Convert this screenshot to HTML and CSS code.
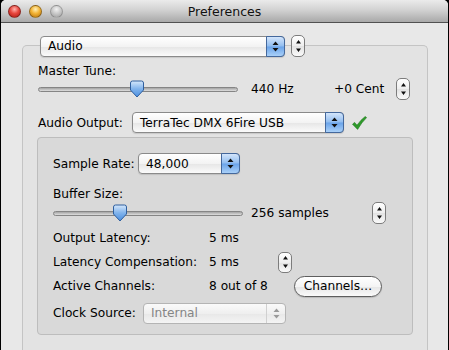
FILE: index.html
```html
<!DOCTYPE html>
<html lang="en">
<head>
  <meta charset="UTF-8"/>
  <title>Preferences</title>
  <link rel="stylesheet" href="styles.css">
</head>
<body>
  <div class="window">
    <header class="titlebar">
      <div class="lights">
        <span class="light close"></span>
        <span class="light minimize"></span>
        <span class="light zoom"></span>
      </div>
      <div class="title">Preferences</div>
    </header>

    <main class="content">
      <section class="group">
        <div class="group-head">
          <div class="popup popup-section">
            <span class="popup-text">Audio</span>
            <span class="arrows"><svg width="7" height="11" viewBox="0 0 7 11"><path d="M3.5 0.5 L6.5 4 H0.5Z M3.5 10.5 L6.5 7 H0.5Z" fill="#111"/></svg></span>
          </div>
          <span class="stepper"><svg width="7" height="14" viewBox="0 0 7 14"><path d="M3.5 1 L6 4.5 H1Z M3.5 13 L6 9.5 H1Z" fill="#111"/></svg></span>
        </div>

        <div class="field-label">Master Tune:</div>
        <div class="slider-row">
          <div class="slider slider-tune">
            <span class="track"></span>
            <svg class="knob knob-tune" width="16" height="18" viewBox="0 0 16 18">
              <defs><linearGradient id="kg1" x1="0" y1="0" x2="0" y2="1"><stop offset="0" stop-color="#d6e8fb"/><stop offset="0.5" stop-color="#7fb2ec"/><stop offset="1" stop-color="#4a8ee0"/></linearGradient></defs>
              <path d="M1.5 3 Q1.5 1 3.5 1 H12.5 Q14.5 1 14.5 3 V10 L8 17 L1.5 10Z" fill="url(#kg1)" stroke="#2f5f9e"/>
            </svg>
          </div>
          <span class="value value-hz">440 Hz</span>
          <span class="value value-cent">+0 Cent</span>
          <span class="stepper"><svg width="7" height="14" viewBox="0 0 7 14"><path d="M3.5 1 L6 4.5 H1Z M3.5 13 L6 9.5 H1Z" fill="#111"/></svg></span>
        </div>

        <div class="row output-row">
          <span class="row-label label-output">Audio Output:</span>
          <div class="popup popup-output">
            <span class="popup-text">TerraTec DMX 6Fire USB</span>
            <span class="arrows"><svg width="7" height="11" viewBox="0 0 7 11"><path d="M3.5 0.5 L6.5 4 H0.5Z M3.5 10.5 L6.5 7 H0.5Z" fill="#111"/></svg></span>
          </div>
          <svg class="check" width="15" height="14" viewBox="0 0 15 14">
            <path d="M0.5 8.2 L2.6 6.4 L5 9.2 Q8.5 4 13.2 0.5 L14.6 1.6 Q9.8 6.2 5.6 13.4Z" fill="#2f9a2b" stroke="#1f7a1c" stroke-width="0.6"/>
          </svg>
        </div>

        <section class="device">
          <div class="row">
            <span class="row-label label-rate">Sample Rate:</span>
            <div class="popup popup-rate">
              <span class="popup-text">48,000</span>
              <span class="arrows"><svg width="7" height="11" viewBox="0 0 7 11"><path d="M3.5 0.5 L6.5 4 H0.5Z M3.5 10.5 L6.5 7 H0.5Z" fill="#111"/></svg></span>
            </div>
          </div>

          <div class="field-label buffer-label">Buffer Size:</div>
          <div class="slider-row">
            <div class="slider slider-buffer">
              <span class="track"></span>
              <svg class="knob knob-buffer" width="16" height="18" viewBox="0 0 16 18">
                <defs><linearGradient id="kg2" x1="0" y1="0" x2="0" y2="1"><stop offset="0" stop-color="#d6e8fb"/><stop offset="0.5" stop-color="#7fb2ec"/><stop offset="1" stop-color="#4a8ee0"/></linearGradient></defs>
                <path d="M1.5 3 Q1.5 1 3.5 1 H12.5 Q14.5 1 14.5 3 V10 L8 17 L1.5 10Z" fill="url(#kg2)" stroke="#2f5f9e"/>
              </svg>
            </div>
            <span class="value value-samples">256 samples</span>
            <span class="stepper"><svg width="7" height="14" viewBox="0 0 7 14"><path d="M3.5 1 L6 4.5 H1Z M3.5 13 L6 9.5 H1Z" fill="#111"/></svg></span>
          </div>

          <div class="info">
            <div class="info-row">
              <span class="info-label">Output Latency:</span>
              <span class="info-value">5 ms</span>
            </div>
            <div class="info-row">
              <span class="info-label">Latency Compensation:</span>
              <span class="info-value value-comp">5 ms</span>
              <span class="stepper stepper-small"><svg width="7" height="14" viewBox="0 0 7 14"><path d="M3.5 1 L6 4.5 H1Z M3.5 13 L6 9.5 H1Z" fill="#111"/></svg></span>
            </div>
            <div class="info-row">
              <span class="info-label">Active Channels:</span>
              <span class="info-value value-channels">8 out of 8</span>
              <button class="pill">Channels…</button>
            </div>
            <div class="info-row clock-row">
              <span class="row-label label-clock">Clock Source:</span>
              <div class="popup popup-clock disabled">
                <span class="popup-text">Internal</span>
                <span class="arrows"><svg width="7" height="11" viewBox="0 0 7 11"><path d="M3.5 0.5 L6.5 4 H0.5Z M3.5 10.5 L6.5 7 H0.5Z" fill="#9a9a9a"/></svg></span>
              </div>
            </div>
          </div>
        </section>
      </section>
    </main>
  </div>
</body>
</html>
```

FILE: styles.css
```css
* {
  box-sizing: border-box;
  margin: 0;
  padding: 0;
}
html, body {
  background: #000;
}
body {
  font-family: "DejaVu Sans", sans-serif;
  font-size: 12.2px;
  color: #000;
  width: 449px;
  height: 350px;
  overflow: hidden;
}
.window {
  margin: 0 1px;
  height: 350px;
  background: #e8e8e8;
  border-radius: 5px 5px 0 0;
  overflow: hidden;
}

/* title bar */
.titlebar {
  height: 23px;
  display: grid;
  grid-template-columns: 1fr auto 1fr;
  align-items: center;
  background: linear-gradient(#ebebeb, #d2d2d2 45%, #a9a9a9);
  border-bottom: 1px solid #515151;
}
.lights {
  display: flex;
  gap: 8px;
  padding-left: 7px;
}
.light {
  width: 13px;
  height: 13px;
  border-radius: 50%;
  border: 1px solid rgba(0,0,0,0.35);
}
.light.close {
  background: radial-gradient(circle at 50% 30%, #ffb3ad 0, #e8473e 45%, #a9180f 100%);
}
.light.minimize {
  background: radial-gradient(circle at 50% 30%, #fff0b8 0, #f3b436 45%, #b4700b 100%);
}
.light.zoom {
  background: radial-gradient(circle at 50% 30%, #f2f2f2 0, #c6c6c6 50%, #9c9c9c 100%);
  border-color: rgba(0,0,0,0.2);
}
.title {
  font-size: 12.5px;
  color: #111;
}

/* main panel */
.content {
  padding-left: 21px;
}
.group {
  margin-top: 22px;
  width: 406px;
  height: 320px;
  padding: 0 15px;
  background: #e3e3e3;
  border: 1px solid #c4c4c4;
  border-bottom: none;
  border-radius: 5px 5px 0 0;
}
.group-head {
  display: flex;
  align-items: center;
  gap: 6px;
  margin: -11px 0 0 2px;
}
.field-label {
  line-height: 14px;
  margin-top: 7px;
}
.slider-row {
  height: 22px;
  display: flex;
  align-items: center;
}
.row {
  height: 21px;
  display: flex;
  align-items: center;
}
.output-row {
  margin-top: 12px;
}
.row-label {
  flex: none;
}
.label-output { width: 94px; }
.label-rate { width: 85px; }
.label-clock { width: 90px; }

/* popup buttons */
.popup {
  height: 21px;
  display: flex;
  align-items: center;
  padding-left: 7px;
  border: 1px solid #8a8a8a;
  border-radius: 4px;
  background: linear-gradient(#ffffff, #f3f3f3 50%, #e6e6e6 52%, #fbfbfb);
  box-shadow: 0 1px 1px rgba(0,0,0,0.12);
}
.popup-text {
  flex: 1;
  white-space: nowrap;
}
.popup .arrows {
  flex: none;
  width: 19px;
  height: 21px;
  margin: -1px -1px -1px 0;
  display: flex;
  align-items: center;
  justify-content: center;
  border: 1px solid #44689c;
  border-radius: 0 4px 4px 0;
  background: linear-gradient(#d3e5fb, #91bdf0 48%, #6aa3e9 52%, #a9d0f8);
}
.popup.disabled {
  border-color: #b4b4b4;
  background: linear-gradient(#fafafa, #efefef 50%, #e8e8e8 52%, #f4f4f4);
  box-shadow: none;
}
.popup.disabled .popup-text {
  color: #858585;
}
.popup.disabled .arrows {
  border: none;
  border-left: 1px solid #d0d0d0;
  margin: 0;
  height: 19px;
  background: none;
}
.popup-section { width: 245px; }
.popup-output { width: 212px; }
.popup-rate { width: 102px; }
.popup-clock { width: 143px; }

.check {
  margin-left: 8px;
}

/* steppers */
.stepper {
  flex: none;
  width: 14px;
  height: 22px;
  display: flex;
  align-items: center;
  justify-content: center;
  border: 1px solid #7c7c7c;
  border-radius: 5px;
  background: linear-gradient(#ffffff, #eeeeee 50%, #e3e3e3 52%, #fafafa);
}
.stepper-small {
  height: 21px;
}

/* sliders */
.slider {
  position: relative;
  height: 22px;
  display: flex;
  align-items: center;
}
.slider-tune {
  width: 200px;
  margin-right: 13px;
}
.slider-buffer {
  width: 190px;
  margin-right: 8px;
}
.track {
  width: 100%;
  height: 5px;
  border: 1px solid #858585;
  border-radius: 3px;
  background: linear-gradient(#a4a4a4, #dedede);
}
.knob {
  position: absolute;
  top: 2px;
}
.knob-tune { left: 91px; }
.knob-buffer { left: 59px; }

.value {
  white-space: nowrap;
}
.value-hz { width: 83px; }
.value-cent { width: 62px; }
.value-samples { width: 121px; }

/* inner device box */
.device {
  margin: 4px 0 0 -1px;
  width: 376px;
  padding: 15px 15px 10px;
  background: #d9d9d9;
  border: 1px solid #bdbdbd;
  border-radius: 4px;
}
.buffer-label {
  margin-top: 13px;
}
.device .slider-row {
  margin-top: 1px;
}
.info {
  margin-top: 3px;
  display: flex;
  flex-direction: column;
  gap: 2px;
}
.info-row {
  height: 22px;
  display: flex;
  align-items: center;
}
.info-label {
  width: 156px;
  flex: none;
}
.info-value {
  white-space: nowrap;
}
.value-comp { width: 69px; }
.value-channels { width: 85px; }
.clock-row {
  margin-top: 3px;
}
.pill {
  width: 88px;
  height: 21px;
  font-family: inherit;
  font-size: 12.2px;
  color: #000;
  border: 1px solid #5e5e5e;
  border-radius: 11px;
  background: linear-gradient(#ffffff, #f4f4f4 50%, #e6e6e6 52%, #fbfbfb);
  box-shadow: 0 1px 1px rgba(0,0,0,0.15);
}
```
